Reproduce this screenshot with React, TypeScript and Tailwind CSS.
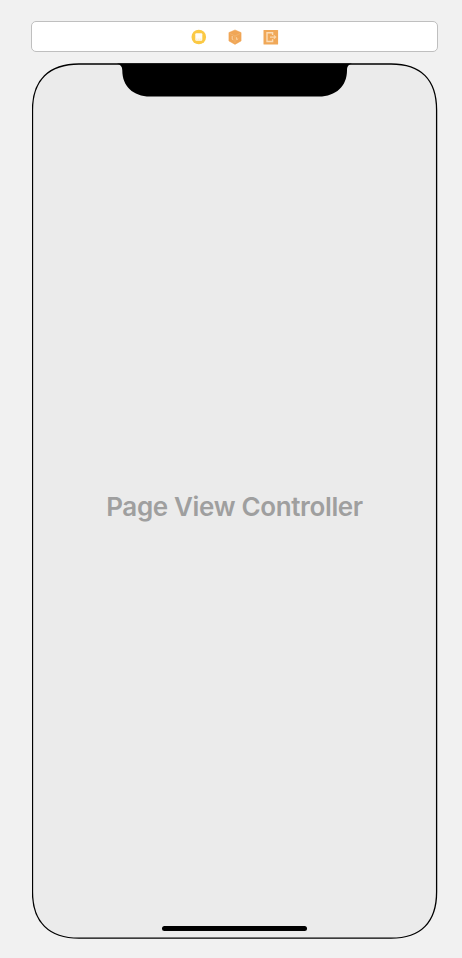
function SceneDock() {
  return (
    <div className="flex h-[31px] w-[407px] items-center justify-center gap-[20px] rounded-[5px] border border-[#bfbfbf] bg-white pl-px">
      <svg className="h-4 w-4" viewBox="0 0 16 16">
        <circle cx="7.8" cy="8" r="7.3" fill="#fbc944" />
        <rect x="4.3" y="4.3" width="7" height="7.4" rx="1" fill="#fffdf8" />
        <path d="M5.3 10.2h1M7.3 10.2h1M9.3 10.2h1" stroke="#f8dd9a" strokeWidth=".8" />
      </svg>
      <svg className="h-4 w-4" viewBox="0 0 16 16">
        <path d="M8 .9 14.1 3.6v8.3L8 15.4 1.9 11.9V3.6Z" fill="#f0a656" stroke="#f0a656" strokeWidth=".5" strokeLinejoin="round" />
        <path d="M2.8 4.5 8 7l5.2-2.500M8 7v7" stroke="#f3b672" strokeWidth=".8" fill="none" />
        <path d="M5.2 7v3.2l1.2.6M9.6 8.2v2.5l1.6-.9" stroke="#f9d3a3" strokeWidth="1" fill="none" />
      </svg>
      <svg className="h-4 w-4" viewBox="0 0 16 16">
        <rect x=".5" y=".9" width="14.6" height="14.6" rx=".6" fill="#f0a858" />
        <path d="M9.6 6V3.700H4v8.800h5.600v-2.300" stroke="#fbddb8" strokeWidth="1.400" fill="none" />
        <path d="M7 8.100h5.500M10.900 6.400l1.800 1.700-1.800 1.700" stroke="#fad5a9" strokeWidth="1.200" fill="none" />
      </svg>
    </div>
  );
}

function DeviceBezel() {
  return (
    <svg className="absolute left-0 top-0 h-[876px] w-[406px]" viewBox="0 0 406 876">
      <path
        d="M47 1H359C389 1 404.6 17 404.6 47V829C404.6 859 389 875.2 359 875.2H47C17 875.2 .5 859 .5 829V47C.5 17 17 1 47 1Z"
        fill="#ebebeb"
        stroke="#000"
        strokeWidth="1.3"
      />
      <path d="M85 .5H320C316.500 1.500 315 3.500 315 7.500C315 23 304 33.500 287 33.500H118C101 33.500 90.300 23 90.300 7.500C90.300 3.500 88.500 1.500 85 .5Z" fill="#000" />
    </svg>
  );
}

export default function App() {
  return (
    <main className="flex h-[958px] w-[462px] flex-col bg-[#f1f1f1] pl-[31px] pt-[21px] font-['Inter','Liberation_Sans',sans-serif]">
      <SceneDock />
      <section className="relative ml-px mt-[11px] flex h-[876px] w-[405px] flex-col items-center">
        <DeviceBezel />
        <h1 className="relative mt-[426px] whitespace-nowrap text-[26px] font-semibold leading-9 tracking-[-0.35px] text-[#9f9f9f]">
          Page View Controller
        </h1>
        <div className="relative mb-2 mt-auto h-[5px] w-[145px] rounded-full bg-black" />
      </section>
    </main>
  );
}
